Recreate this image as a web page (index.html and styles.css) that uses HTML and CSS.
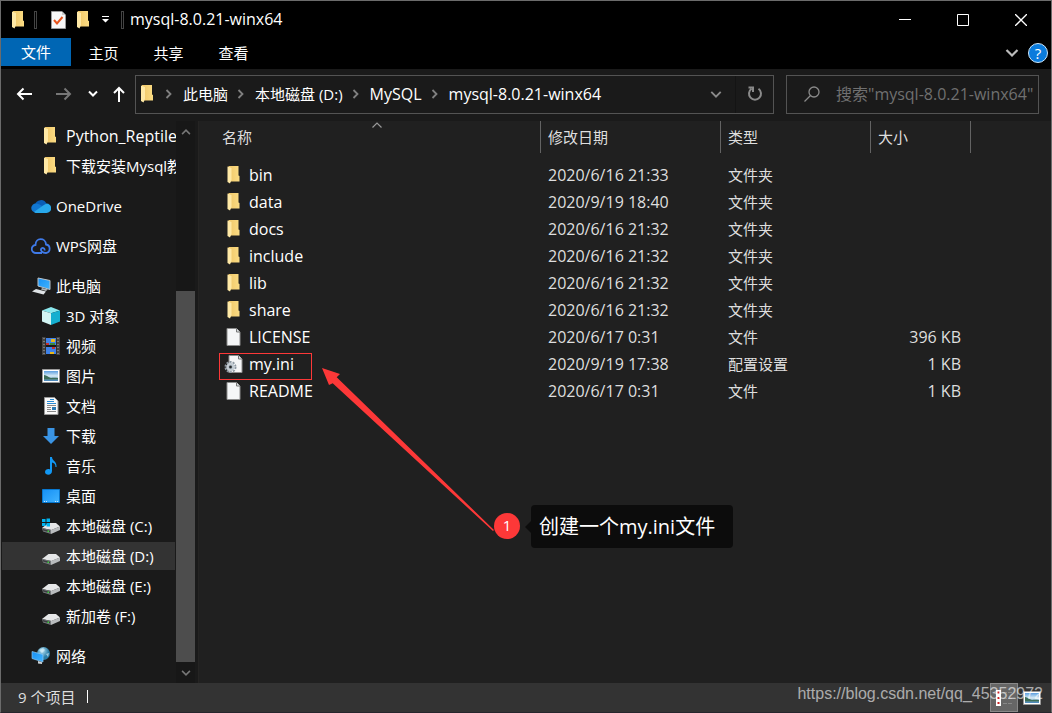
FILE: index.html
```html
<!DOCTYPE html>
<html lang="zh-CN">
<head>
  <meta charset="UTF-8">
  <meta name="viewport" content="width=device-width, initial-scale=1.0">
  <title>mysql-8.0.21-winx64</title>
  <link rel="stylesheet" href="styles.css">
</head>
<body>
  <svg class="sprite" aria-hidden="true">
    <defs>
      <linearGradient id="gold" x1="0" x2="1"><stop offset="0" stop-color="#f0c768"/><stop offset="1" stop-color="#fbdc84"/></linearGradient>
      <linearGradient id="screen" x1="0" y1="0" x2="1" y2="1"><stop offset="0" stop-color="#1590f5"/><stop offset="1" stop-color="#42b4ff"/></linearGradient>
      <linearGradient id="sky" x1="0" y1="0" x2="0" y2="1"><stop offset="0" stop-color="#5d9fe0"/><stop offset=".5" stop-color="#d9ecf5"/><stop offset="1" stop-color="#3f7fb5"/></linearGradient>
      <radialGradient id="globe" cx=".4" cy=".3"><stop offset="0" stop-color="#b9e4f5"/><stop offset="1" stop-color="#2b7ea8"/></radialGradient>
    </defs>
    <symbol id="folder" viewBox="0 0 12 18">
      <path fill="url(#gold)" d="M1 0h10v9.500l1 .5v5.500H1z"/>
      <path fill="#ffe9a6" d="M0 .5l4 1.500v12L2.500 17.500 0 16z"/>
    </symbol>
    <symbol id="file" viewBox="0 0 14 18">
      <path fill="#f5f6f7" stroke="#8c8c8c" d="M.5.5h9.500l3.500 3.500v13.500H.5z"/>
      <path fill="#dcdfe2" stroke="#777" d="M10 .5V4h3.500"/>
    </symbol>
    <symbol id="ini" viewBox="0 0 18 18">
      <path fill="#f5f6f7" stroke="#8c8c8c" d="M4.500.5H14l3.500 3.500v13.500h-13z"/>
      <path fill="#dcdfe2" stroke="#777" d="M14 .5V4h3.500"/>
      <circle cx="6" cy="12" r="5" fill="none" stroke="#8e99a3" stroke-width="2" stroke-dasharray="2 1.140"/>
      <circle cx="6" cy="12" r="3" fill="#58636c" stroke="#c3ccd3" stroke-width="2.500"/>
      <circle cx="6" cy="12" r="1" fill="#222"/>
    </symbol>
    <symbol id="disk" viewBox="0 0 18 11">
      <path fill="#e6e7e8" d="M6.500 0H14l4 3.500L9.500 7 0 5z"/>
      <path fill="#777b7e" d="M0 5l9 2v4l-8-2.500z"/>
      <path fill="#b9bcbe" d="M9 7l9-3.500V7l-9 4z"/>
      <path fill="#3a3d3f" d="M1 6l7 1.800v1.700L1 7.600z"/>
      <path fill="#3ed33e" d="M5.500 7.500h1.500v1.500H5.500z"/>
    </symbol>
    <symbol id="chev" viewBox="0 0 8 12"><path fill="none" stroke="currentColor" stroke-width="1.800" d="M1.500 2l4 4-4 4"/></symbol>
    <symbol id="down" viewBox="0 0 14 10"><path fill="none" stroke="currentColor" stroke-width="2.200" d="M1.500 2L7 7.500 12.500 2"/></symbol>
    <symbol id="picture" viewBox="0 0 18 14">
      <path fill="#fff" stroke="#9a9a9a" d="M.5.5h17v13H.5z"/>
      <path fill="url(#sky)" d="M2 2h14v10H2z"/>
      <path fill="#3d6e59" d="M2 6c3 0 4 2.500 7 3 3-.5 5 0 7 0v1.500H2z"/>
    </symbol>
  </svg>

  <div class="window">
    <header class="titlebar">
      <svg class="folder"><use href="#folder"/></svg>
      <span class="divider"></span>
      <button class="quick" aria-label="属性">
        <svg width="15" height="18" viewBox="0 0 15 18"><path fill="#f7f7f7" stroke="#9a9a9a" d="M.5.5H11l3.500 3.500v13.500H.5z"/><path fill="#ccc" d="M11 .5V4h3.500z"/><path fill="none" stroke="#e8541c" stroke-width="2" d="M3 9l3 3.500L11.500 6"/></svg>
      </button>
      <button class="quick" aria-label="新建文件夹"><svg class="folder"><use href="#folder"/></svg></button>
      <button class="quick more" aria-label="自定义快速访问工具栏">
        <svg width="7" height="7" viewBox="0 0 7 7"><path fill="#fff" d="M0 0h7v1H0zM0 3h7L3.500 6.500z"/></svg>
      </button>
      <span class="divider"></span>
      <h1>mysql-8.0.21-winx64</h1>
      <div class="controls">
        <button aria-label="最小化"><svg width="12" height="12"><path stroke="#fff" d="M0 5.500h12"/></svg></button>
        <button aria-label="最大化"><svg width="12" height="12"><path fill="none" stroke="#fff" d="M.5.500h11v11H.5z"/></svg></button>
        <button aria-label="关闭"><svg width="12" height="12"><path stroke="#fff" stroke-width="1.300" d="M0 0l12 12M12 0L0 12"/></svg></button>
      </div>
    </header>

    <nav class="ribbon">
      <button class="active">文件</button>
      <button>主页</button>
      <button>共享</button>
      <button>查看</button>
      <button class="expand" aria-label="展开功能区"><svg width="14" height="10"><use href="#down"/></svg></button>
      <button class="help" aria-label="帮助">?</button>
    </nav>

    <div class="toolbar">
      <button class="back" aria-label="返回"><svg width="16" height="14" viewBox="0 0 16 14"><path fill="none" stroke="#fff" stroke-width="2" d="M16 7H2M7.500 1.500L2 7l5.500 5.500"/></svg></button>
      <button class="forward" aria-label="前进"><svg width="16" height="14" viewBox="0 0 16 14"><path fill="none" stroke="#777" stroke-width="2" d="M0 7h14M8.500 1.500L14 7l-5.500 5.500"/></svg></button>
      <button class="recent" aria-label="最近浏览的位置"><svg width="10" height="8" viewBox="0 0 10 8"><path fill="none" stroke="#fff" stroke-width="2" d="M1 1.500l4 4 4-4"/></svg></button>
      <button class="up" aria-label="上移"><svg width="12" height="16" viewBox="0 0 12 16"><path fill="none" stroke="#fff" stroke-width="2" d="M6 16V2M1 7l5-5 5 5"/></svg></button>
      <div class="address">
        <svg class="folder"><use href="#folder"/></svg>
        <svg class="chev"><use href="#chev"/></svg>
        <a href="#">此电脑</a>
        <svg class="chev"><use href="#chev"/></svg>
        <a href="#">本地磁盘 (D:)</a>
        <svg class="chev"><use href="#chev"/></svg>
        <a class="latin" href="#">MySQL</a>
        <svg class="chev"><use href="#chev"/></svg>
        <a class="latin" href="#">mysql-8.0.21-winx64</a>
        <button class="history" aria-label="以前的位置"><svg width="12" height="9"><use href="#down"/></svg></button>
        <button class="refresh" aria-label="刷新"><svg width="16" height="16" viewBox="0 0 16 16"><path fill="none" stroke="#8a8a8a" stroke-width="2" d="M11.500 2.800A6 6 0 1 1 4.500 2.800M1.500 1.500H6V6"/></svg></button>
      </div>
      <label class="search">
        <svg width="16" height="16" viewBox="0 0 16 16"><circle cx="10" cy="6" r="5" fill="none" stroke="#8a8a8a" stroke-width="1.300"/><path stroke="#8a8a8a" stroke-width="1.300" d="M6.500 9.500L.5 15.500"/></svg>
        <input class="latin" type="text" aria-label="搜索" placeholder='搜索"mysql-8.0.21-winx64"'>
      </label>
    </div>

    <div class="content">
      <aside class="sidebar">
        <div class="tree">
          <ul>
            <li class="sub"><svg class="folder"><use href="#folder"/></svg><a class="latin" href="#">Python_Reptile</a></li>
            <li class="sub"><svg class="folder"><use href="#folder"/></svg><a href="#">下载安装Mysql教程</a></li>
          </ul>
          <ul>
            <li><svg class="icon" viewBox="0 0 20 14"><path fill="#0a5db5" d="M4 6a6 6 0 0 1 11.500-1L10 9z"/><path fill="#1177d1" d="M4.500 13.500A4.500 4.500 0 0 1 5 4.500c2 0 4 1 6 2.500l-5 6.500z"/><path fill="#28a8ea" d="M3 13l9-6.500 3.500-2A4.700 4.700 0 0 1 15.500 14h-11z"/></svg><a href="#">OneDrive</a></li>
          </ul>
          <ul>
            <li><svg class="icon" viewBox="0 0 20 16"><path fill="none" stroke="#3f7ae8" stroke-width="1.800" d="M11 15H5a4 4 0 0 1-.5-8C4.500-.5 14.500-.8 15 6.500a4.300 4.300 0 0 1 0 8.500c-4 0-6-3-4.500-4.500 1.500-1.300 3.500 0 3 2"/></svg><a href="#">WPS网盘</a></li>
          </ul>
          <ul>
            <li><svg class="icon" viewBox="0 0 20 18"><path fill="url(#screen)" stroke="#b9c2c9" d="M7 1l12 2.500v9L7 9z"/><path fill="#aeb4b8" d="M11 11l6 1.500-2 1.500-5-1.500z"/><path fill="#dfe3e6" d="M5 12l10 2.500-2.500 3L1 14.500z"/></svg><a href="#">此电脑</a></li>
            <li class="sub"><svg class="icon" viewBox="0 0 18 18"><path fill="#8be8ee" d="M0 3.500L9 0l9 3.500-9 2.800z"/><path fill="#d3f5f4" d="M0 3.500l9 2.800V18l-9-3.500z"/><path fill="#15afd0" d="M18 3.500L9 6.300V18l9-3.500z"/></svg><a href="#">3D 对象</a></li>
            <li class="sub"><svg class="icon" viewBox="0 0 18 18"><path fill="#454545" d="M0 0h18v18H0z"/><path fill="#1a1a1a" d="M3.500 0h11v18h-11z"/><path stroke="#8a8a8a" stroke-width="1.500" stroke-dasharray="1 2" d="M2 1v17M16 1v17"/><path fill="#3f82e8" d="M4 1h10v7H4zM4 10h10v7H4z"/><path fill="#e8b71c" d="M9 2h4v3H9zM8 15h4v2H8z"/><path fill="#3c8a3c" d="M8 6h5v2H8z"/><path fill="#c33030" d="M4 6h3v2H4zM10 10h3v2h-3z"/></svg><a href="#">视频</a></li>
            <li class="sub"><svg class="icon"><use href="#picture"/></svg><a href="#">图片</a></li>
            <li class="sub"><svg class="icon" viewBox="0 0 18 18"><path fill="#fafafa" stroke="#999" d="M2.500.5h10L16 4v13.500H2.500z"/><path stroke="#2a8bd4" d="M8 2.500h4M5 4.500h7M5 6.500h9"/><path stroke="#888" d="M5 8.500h9M5 10.500h4M5 12.500h4M5 14.500h9"/><path fill="#2a79b4" d="M10 10h4v3h-4z"/></svg><a href="#">文档</a></li>
            <li class="sub"><svg class="icon" viewBox="0 0 18 18"><path fill="#3a94e4" d="M5.500 1h7v8H17l-8 8-8-8h4.500z"/></svg><a href="#">下载</a></li>
            <li class="sub"><svg class="icon" viewBox="0 0 18 18"><path fill="#1298f4" d="M8 0h2c0 4 5 4 4.500 10h-1c0-3-1.500-4-3.500-4.500V14c0 5-7 4.500-7 1 0-2.500 3-3.500 5-2.500z"/></svg><a href="#">音乐</a></li>
            <li class="sub"><svg class="icon" viewBox="0 0 18 14"><path fill="url(#screen)" stroke="#0878d0" d="M.5.5h17v13H.5z"/><path stroke="#c8e6ff" stroke-dasharray="1 1" d="M2 12.500h3M13 12.500h3"/></svg><a href="#">桌面</a></li>
            <li class="sub"><svg class="icon" viewBox="0 0 18 16"><svg y="5" width="18" height="11"><use href="#disk"/></svg><path fill="#00b4f0" d="M0 1h3.500v3H0zM4.500.5H8V4H4.500zM0 5h3.500v3H0zM4.500 5H8v3.500H4.500z"/></svg><a href="#">本地磁盘 (C:)</a></li>
            <li class="sub current"><svg class="icon low"><use href="#disk"/></svg><a href="#">本地磁盘 (D:)</a></li>
            <li class="sub"><svg class="icon low"><use href="#disk"/></svg><a href="#">本地磁盘 (E:)</a></li>
            <li class="sub"><svg class="icon low"><use href="#disk"/></svg><a href="#">新加卷 (F:)</a></li>
          </ul>
          <ul>
            <li><svg class="icon" viewBox="0 0 20 18"><circle cx="12.500" cy="6.500" r="6.500" fill="url(#globe)"/><path fill="#dff4fb" d="M8 3l4-2 2 2-3 3zM15 7l3-1-1 4z" opacity=".6"/><path fill="url(#screen)" stroke="#8cc8f2" stroke-width=".7" d="M1 4.500l11 3V15L1 11.500z"/><path fill="#ccd3d7" d="M7 14l4 1.200V17l-4-.5z"/></svg><a href="#">网络</a></li>
          </ul>
        </div>
        <div class="scrollbar">
          <button aria-label="向上滚动"><svg class="flip" width="10" height="8"><use href="#down"/></svg></button>
          <div class="thumb"></div>
          <button aria-label="向下滚动"><svg width="10" height="8"><use href="#down"/></svg></button>
        </div>
      </aside>

      <main class="files">
        <table>
          <colgroup>
            <col class="col-name"><col class="col-date"><col class="col-type"><col class="col-size"><col>
          </colgroup>
          <thead>
            <tr>
              <th><span>名称</span></th>
              <th><span>修改日期</span></th>
              <th><span>类型</span></th>
              <th><span>大小</span></th>
              <td></td>
            </tr>
          </thead>
          <tbody>
            <tr><td><svg><use href="#folder"/></svg>bin</td><td>2020/6/16 21:33</td><td>文件夹</td><td></td><td></td></tr>
            <tr><td><svg><use href="#folder"/></svg>data</td><td>2020/9/19 18:40</td><td>文件夹</td><td></td><td></td></tr>
            <tr><td><svg><use href="#folder"/></svg>docs</td><td>2020/6/16 21:32</td><td>文件夹</td><td></td><td></td></tr>
            <tr><td><svg><use href="#folder"/></svg>include</td><td>2020/6/16 21:32</td><td>文件夹</td><td></td><td></td></tr>
            <tr><td><svg><use href="#folder"/></svg>lib</td><td>2020/6/16 21:32</td><td>文件夹</td><td></td><td></td></tr>
            <tr><td><svg><use href="#folder"/></svg>share</td><td>2020/6/16 21:32</td><td>文件夹</td><td></td><td></td></tr>
            <tr><td><svg><use href="#file"/></svg>LICENSE</td><td>2020/6/17 0:31</td><td>文件</td><td>396 KB</td><td></td></tr>
            <tr><td><svg><use href="#ini"/></svg>my.ini</td><td>2020/9/19 17:38</td><td>配置设置</td><td>1 KB</td><td></td></tr>
            <tr><td><svg><use href="#file"/></svg>README</td><td>2020/6/17 0:31</td><td>文件</td><td>1 KB</td><td></td></tr>
          </tbody>
        </table>
        <svg class="sort" viewBox="0 0 10 6"><path fill="none" stroke="#999" stroke-width="1.200" d="M.5 5.500L5 1l4.500 4.500"/></svg>

        <!-- annotation -->
        <div class="mark"></div>
        <svg class="arrow" viewBox="0 0 180 170"><path fill="#fd3838" d="M2 3l18 6-3.300 3.300L174 165l-1 1L12.700 18.300 9 20z"/></svg>
        <div class="step">1</div>
        <div class="callout">创建一个<b>my.ini</b>文件</div>
      </main>
    </div>

    <footer class="status">
      <span>9 个项目</span>
      <span class="bar"></span>
      <div class="views">
        <button class="on" aria-label="详细信息">
          <svg width="18" height="18" viewBox="0 0 18 18"><path fill="#fff" d="M1 1h5v16H1z"/><path fill="#c22" d="M2.500 2.500h2v2h-2zM2.500 8h2v2h-2zM2.500 13h2v2h-2z"/><path stroke="#888" stroke-dasharray="4 1" d="M8 3.500h9M8 9.500h9M8 14.500h9"/></svg>
        </button>
        <button aria-label="大缩略图"><svg width="18" height="14"><use href="#picture"/></svg></button>
      </div>
      <div class="watermark">https://blog.csdn.net/qq_45352972</div>
    </footer>
  </div>
</body>
</html>
```

FILE: styles.css
```css
* {
  box-sizing: border-box;
}
body {
  margin: 0;
  background: #1a1a1a;
  color: #fff;
  font-family: "Open Sans", "Noto Sans CJK SC", sans-serif;
  font-size: 15px;
  line-height: 20px;
}
button {
  display: flex;
  align-items: center;
  justify-content: center;
  padding: 0;
  border: 0;
  background: none;
  color: inherit;
  font: inherit;
}
a {
  color: inherit;
  text-decoration: none;
  white-space: nowrap;
}
svg {
  display: block;
  flex: none;
}
.sprite {
  position: absolute;
  width: 0;
  height: 0;
}
.folder {
  width: 12px;
  height: 18px;
}
.window {
  display: flex;
  flex-direction: column;
  min-height: 100vh;
  border: 1px solid #6b6b6b;
  border-bottom-color: #26252c;
}

/* title bar */
.titlebar {
  display: flex;
  align-items: center;
  height: 37px;
  padding-left: 11px;
  background: #000;
}
.divider {
  width: 3px;
  height: 18px;
  margin-left: 10px;
  border: 1px solid #444;
}
.quick {
  margin-left: 11px;
}
.quick:first-of-type {
  margin-left: 14px;
}
.quick.more {
  width: 11px;
}
.titlebar h1 {
  margin: 0 0 0 6px;
  padding-bottom: 2px;
  font-size: 16px;
  font-weight: 400;
}
.controls {
  display: flex;
  margin: 0 1px 0 auto;
}
.controls button {
  width: 58px;
  height: 37px;
}

/* ribbon */
.ribbon {
  display: flex;
  height: 31px;
  background: #000;
}
.ribbon button {
  width: 65px;
  height: 30px;
}
.ribbon .active {
  width: 70px;
  height: 28px;
  background: #0066b4;
}
.ribbon .expand {
  width: 24px;
  margin-left: auto;
  color: #bbb;
}
.ribbon .help {
  width: 20px;
  height: 20px;
  margin: 5px 3px 0 4px;
  border: 1px solid #cde6fa;
  border-radius: 50%;
  background: #0a7bdc;
}

/* toolbar */
.toolbar {
  display: flex;
  align-items: center;
  height: 52px;
  padding: 0 12px 2px 15px;
}
.forward {
  margin-left: 24px;
}
.recent {
  margin-left: 16px;
}
.up {
  margin-left: 15px;
}
.address,
.search {
  display: flex;
  align-items: center;
  height: 39px;
  border: 1px solid #535353;
}
.address {
  flex: 1;
  min-width: 0;
  margin: 0 12px 0 10px;
  padding-left: 5px;
}
.latin {
  font-size: 16px;
}
.chev {
  width: 8px;
  height: 12px;
  margin: 0 10px 0 9px;
  color: #808080;
}
.address .folder + .chev {
  margin: 0 10px 0 12px;
}
.history {
  width: 38px;
  margin-left: auto;
  color: #8a8a8a;
}
.refresh {
  width: 38px;
  height: 37px;
  border-left: 1px solid #141414;
}
.search {
  width: 253px;
  padding-left: 17px;
}
.search input {
  flex: 1;
  min-width: 0;
  margin-left: 16px;
  padding: 0;
  border: 0;
  outline: 0;
  background: none;
  color: #fff;
  font-family: inherit;
}
.search input::placeholder {
  color: #707070;
}

/* navigation pane */
.content {
  display: flex;
  flex: 1;
}
.sidebar {
  display: flex;
  width: 198px;
  padding-right: 3px;
  border-right: 1px solid #252423;
}
.tree {
  flex: 1;
  min-width: 0;
  overflow: hidden;
}
.tree ul {
  display: flex;
  flex-direction: column;
  margin: 0 0 10px;
  padding: 0;
  list-style: none;
}
.tree li {
  display: flex;
  align-items: center;
  gap: 5px;
  height: 28px;
  margin: 1px;
  padding-left: 29px;
  overflow: hidden;
}
.tree .sub {
  gap: 6px;
  margin-right: 0;
  padding-left: 40px;
}
.tree .sub .folder {
  margin: 0 4px 0 2px;
}
.icon {
  width: 20px;
  height: 18px;
}
.sub .icon {
  width: 18px;
}
.sub .low {
  height: 11px;
  margin-top: 6px;
}
.tree .current {
  margin-right: 1px;
  background: #333;
}
.scrollbar {
  display: flex;
  flex-direction: column;
  width: 19px;
  background: #171717;
  color: #777;
}
.scrollbar button {
  height: 21px;
}
.flip {
  transform: rotate(180deg);
}
.thumb {
  flex: 1;
  margin-top: 149px;
  background: #4d4d4d;
}

/* file list */
.files {
  position: relative;
  flex: 1;
  background: #202020;
}
table {
  width: 100%;
  table-layout: fixed;
  border-collapse: collapse;
}
.col-name {
  width: 342px;
}
.col-date {
  width: 180px;
}
.col-type {
  width: 150px;
}
.col-size {
  width: 100px;
}
th {
  height: 40px;
  padding: 0;
  font-weight: 400;
  text-align: left;
  vertical-align: top;
}
th span {
  display: block;
  height: 32px;
  padding-left: 7px;
  border-right: 1px solid #636363;
  color: #dedede;
  line-height: 32px;
}
th:first-child span {
  padding-left: 23px;
}
tbody td {
  height: 27px;
  padding: 0 0 0 7px;
  color: #dedede;
  font-size: 16px;
}
tbody td:first-child {
  display: flex;
  align-items: center;
  gap: 6px;
  padding-left: 25px;
  color: #fff;
}
tbody svg {
  width: 19px;
  height: 18px;
}
tbody td:nth-child(3) {
  font-size: 15px;
}
tbody td:nth-child(4) {
  padding-right: 10px;
  text-align: right;
}
.sort {
  position: absolute;
  top: 1px;
  left: 173px;
  width: 10px;
  height: 6px;
}
.mark {
  position: absolute;
  top: 232px;
  left: 20px;
  width: 93px;
  height: 27px;
  border: 1px solid #fd3838;
}
.arrow {
  position: absolute;
  top: 244px;
  left: 121px;
  width: 180px;
  height: 170px;
}
.step {
  position: absolute;
  top: 392px;
  left: 295px;
  width: 26px;
  height: 26px;
  border-radius: 50%;
  background: #fd3838;
  line-height: 24px;
  text-align: center;
}
.callout {
  position: absolute;
  top: 384px;
  left: 332px;
  width: 202px;
  padding: 0 8px;
  border-radius: 4px;
  background: #0c0c0c;
  font-size: 20px;
  line-height: 43px;
  white-space: nowrap;
}
.callout b {
  font-weight: 500;
}
.callout::before {
  content: "";
  position: absolute;
  top: 16px;
  left: -6px;
  border: 6px solid transparent;
  border-left: 0;
  border-right-color: #0c0c0c;
}

/* status bar */
.status {
  position: relative;
  display: flex;
  align-items: center;
  height: 29px;
  padding: 0 5px 0 17px;
  background: #333;
  color: #dedede;
}
.status > span {
  margin-bottom: 2px;
}
.bar {
  width: 1px;
  height: 13px;
  margin-left: 12px;
  background: #fff;
}
.views {
  display: flex;
  margin-left: auto;
}
.views button {
  width: 28px;
  height: 29px;
}
.views .on {
  border: 1px solid #888;
  background: #666;
}
.watermark {
  position: absolute;
  right: 8px;
  top: 1px;
  color: rgba(255, 255, 255, 0.6);
  font-family: "Liberation Sans", sans-serif;
  font-size: 16px;
}
```
